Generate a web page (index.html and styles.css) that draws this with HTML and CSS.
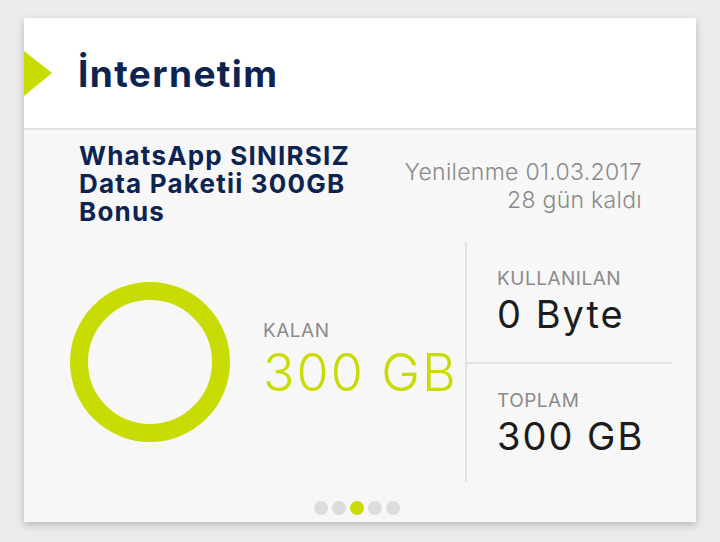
FILE: index.html
```html
<!DOCTYPE html>
<html lang="tr">
<head>
    <meta charset="UTF-8">
    <meta name="viewport" content="width=device-width, initial-scale=1.0">
    <title>İnternetim</title>
    <link rel="stylesheet" href="styles.css">
</head>
<body>
    <div class="prev-card"></div>
    <div class="card">
        <div class="card-header">
            <span class="marker"></span>
            <h1>İnternetim</h1>
        </div>
        <div class="card-body">
            <div class="package">
                <h2>WhatsApp SINIRSIZ<br>Data Paketii 300GB<br>Bonus</h2>
                <div class="renewal">Yenilenme 01.03.2017<br>28 gün kaldı</div>
            </div>
            <div class="usage">
                <div class="remaining">
                    <svg class="ring" width="162" height="162" viewBox="0 0 162 162">
                        <circle cx="81" cy="81" r="71" fill="none" stroke="#c8dc03" stroke-width="18"/>
                    </svg>
                    <div class="remaining-text">
                        <div class="label">KALAN</div>
                        <div class="big-value">300 GB</div>
                    </div>
                </div>
                <div class="totals">
                    <div class="stat">
                        <div class="label">KULLANILAN</div>
                        <div class="value">0 Byte</div>
                    </div>
                    <div class="stat">
                        <div class="label">TOPLAM</div>
                        <div class="value">300 GB</div>
                    </div>
                </div>
            </div>
            <div class="dots">
                <span class="dot"></span>
                <span class="dot"></span>
                <span class="dot active"></span>
                <span class="dot"></span>
                <span class="dot"></span>
            </div>
        </div>
    </div>
</body>
</html>
```

FILE: styles.css
```css
body {
    margin: 0;
    height: 542px;
    overflow: hidden;
    background: #ececec;
    font-family: Inter, "Open Sans", sans-serif;
}
.prev-card {
    height: 0;
    margin: 0 24px;
    box-shadow: 0 2px 5px rgba(0, 0, 0, 0.15);
}
.card {
    margin: 18px 24px 0;
    background: #f7f7f7;
    box-shadow: 0 3px 8px rgba(0, 0, 0, 0.22);
}
.card-header {
    height: 110px;
    background: #fff;
    border-bottom: 2px solid #e1e1e1;
    display: flex;
    align-items: center;
}
.marker {
    width: 0;
    height: 0;
    border-left: 28px solid #c8dc03;
    border-top: 22px solid transparent;
    border-bottom: 23px solid transparent;
}
h1 {
    margin: 0 0 0 26px;
    font-size: 37px;
    font-weight: 700;
    line-height: 1;
    letter-spacing: 1.4px;
    color: #0d2451;
}
.card-body {
    padding: 12px 24px 7px 0;
}
.package {
    display: flex;
    justify-content: space-between;
    padding: 0 30px 0 55px;
}
h2 {
    margin: 0;
    font-size: 26px;
    font-weight: 700;
    line-height: 28px;
    letter-spacing: 1.2px;
    color: #0d2451;
}
.renewal {
    margin-top: 16px;
    text-align: right;
    font-size: 23px;
    font-weight: 300;
    line-height: 28px;
    letter-spacing: 0.3px;
    color: #8a8a8a;
}
.usage {
    display: flex;
    height: 240px;
    margin-top: 16px;
}
.remaining {
    flex: 1;
    display: flex;
    align-items: center;
    gap: 32px;
    padding-left: 45px;
}
.remaining-text {
    margin-top: -6px;
}
.remaining-text .label {
    margin-bottom: 5px;
}
.totals {
    width: 205px;
    border-left: 2px solid #e2e2e2;
}
.stat {
    height: 120px;
    box-sizing: border-box;
    padding: 26px 0 0 30px;
}
.stat + .stat {
    border-top: 2px solid #e2e2e2;
}
.label {
    font-size: 19px;
    line-height: 22px;
    letter-spacing: 0.5px;
    color: #8a8a8a;
}
.value {
    margin-top: 4px;
    font-size: 38px;
    line-height: 40px;
    letter-spacing: 2px;
    color: #1c1c1c;
}
.big-value {
    font-size: 52px;
    font-weight: 300;
    line-height: 52px;
    letter-spacing: 2px;
    color: #c8dc03;
}
.dots {
    display: flex;
    justify-content: center;
    gap: 4px;
    margin-top: 19px;
    padding-left: 18px;
}
.dot {
    width: 14px;
    height: 14px;
    border-radius: 50%;
    background: #dcdcdc;
}
.dot.active {
    background: #c8dc03;
}
```
